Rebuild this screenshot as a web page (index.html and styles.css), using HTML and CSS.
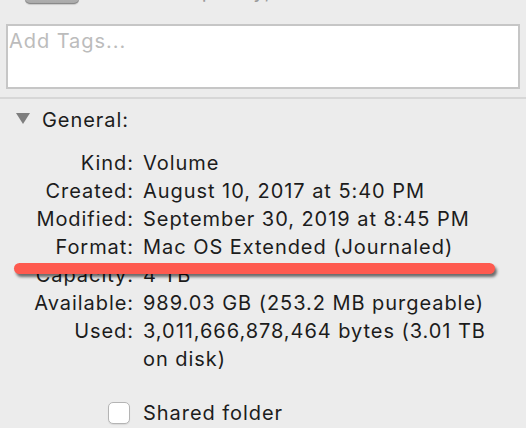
FILE: index.html
```html
<!DOCTYPE html>
<html>
<head>
<meta charset="utf-8">
<link rel="stylesheet" href="styles.css">
</head>
<body>
<div class="panel">
  <div class="header">
    <div class="drive-icon"></div>
    <div class="header-text">4 TB Capacity, 989.03 GB Available</div>
  </div>
  <div class="tags">Add Tags...</div>
  <div class="separator"></div>
  <div class="section">
    <div class="disclosure">
      <span class="triangle"></span>
      <span class="section-title">General:</span>
    </div>
    <div class="info">
      <div class="label">Kind:</div><div class="value">Volume</div>
      <div class="label">Created:</div><div class="value">August 10, 2017 at 5:40 PM</div>
      <div class="label">Modified:</div><div class="value">September 30, 2019 at 8:45 PM</div>
      <div class="label">Format:</div><div class="value">Mac OS Extended (Journaled)</div>
      <div class="label">Capacity:</div><div class="value">4 TB</div>
      <div class="label">Available:</div><div class="value">989.03 GB (253.2 MB purgeable)</div>
      <div class="label">Used:</div><div class="value">3,011,666,878,464 bytes (3.01 TB on disk)</div>
    </div>
    <div class="checkbox-row">
      <span class="checkbox"></span>
      <span class="checkbox-label">Shared folder</span>
    </div>
    <div class="strike"></div>
  </div>
</div>
</body>
</html>
```
FILE: styles.css
```css
html, body {
  margin: 0;
  padding: 0;
  background: #ececec;
}
body {
  width: 526px;
  height: 428px;
  overflow: hidden;
  font-family: Inter, "Liberation Sans", Arial, sans-serif;
  font-size: 20px;
  letter-spacing: 0.95px;
  color: #1c1c1c;
}
.panel {
  position: relative;
}
.header {
  height: 24px;
  display: flex;
  align-items: flex-start;
  overflow: hidden;
}
.drive-icon {
  margin-left: 25px;
  margin-top: -30px;
  width: 54px;
  height: 34px;
  border-radius: 5px;
  background: linear-gradient(#d0d0d0, #a9a9a9);
  box-shadow: inset 0 -1px 0 #8a8a8a, 0 1px 1px rgba(0,0,0,0.15);
}
.header-text {
  margin-left: 40px;
  margin-top: -19px;
  color: #9a9a9a;
  font-size: 20px;
  line-height: 20px;
}
.tags {
  margin: 0 6px;
  border: 2px solid #c6c6c6;
  background: #ffffff;
  color: #bcbcbc;
  font-size: 20px;
  line-height: 24px;
  padding: 3px 0 0 1px;
  box-sizing: border-box;
  height: 65px;
}
.separator {
  margin-top: 8px;
  height: 2px;
  background: #d7d7d7;
}
.section {
  position: relative;
  padding-top: 7px;
}
.disclosure {
  display: flex;
  align-items: center;
  height: 28px;
  line-height: 28px;
}
.triangle {
  margin-left: 16px;
  width: 0;
  height: 0;
  border-left: 7px solid transparent;
  border-right: 7px solid transparent;
  border-top: 11px solid #7e7e7e;
  margin-top: -4px;
}
.section-title {
  margin-left: 12px;
}
.info {
  margin-top: 15px;
  display: grid;
  grid-template-columns: 134px 360px;
  column-gap: 9px;
  line-height: 28px;
}
.label {
  text-align: right;
}
.checkbox-row {
  margin-top: 26px;
  display: flex;
  align-items: center;
  height: 28px;
  line-height: 28px;
}
.checkbox {
  margin-left: 108px;
  width: 22px;
  height: 22px;
  box-sizing: border-box;
  border: 1px solid #b4b4b4;
  border-radius: 5px;
  background: #ffffff;
  box-shadow: 0 1px 1px rgba(0,0,0,0.08);
}
.checkbox-label {
  margin-left: 13px;
}
.strike {
  position: absolute;
  left: 14px;
  top: 164px;
  width: 481px;
  height: 11px;
  border-radius: 6px;
  background: #fe5a4f;
  box-shadow: 2px 3px 3px rgba(0,0,0,0.55);
}
```
